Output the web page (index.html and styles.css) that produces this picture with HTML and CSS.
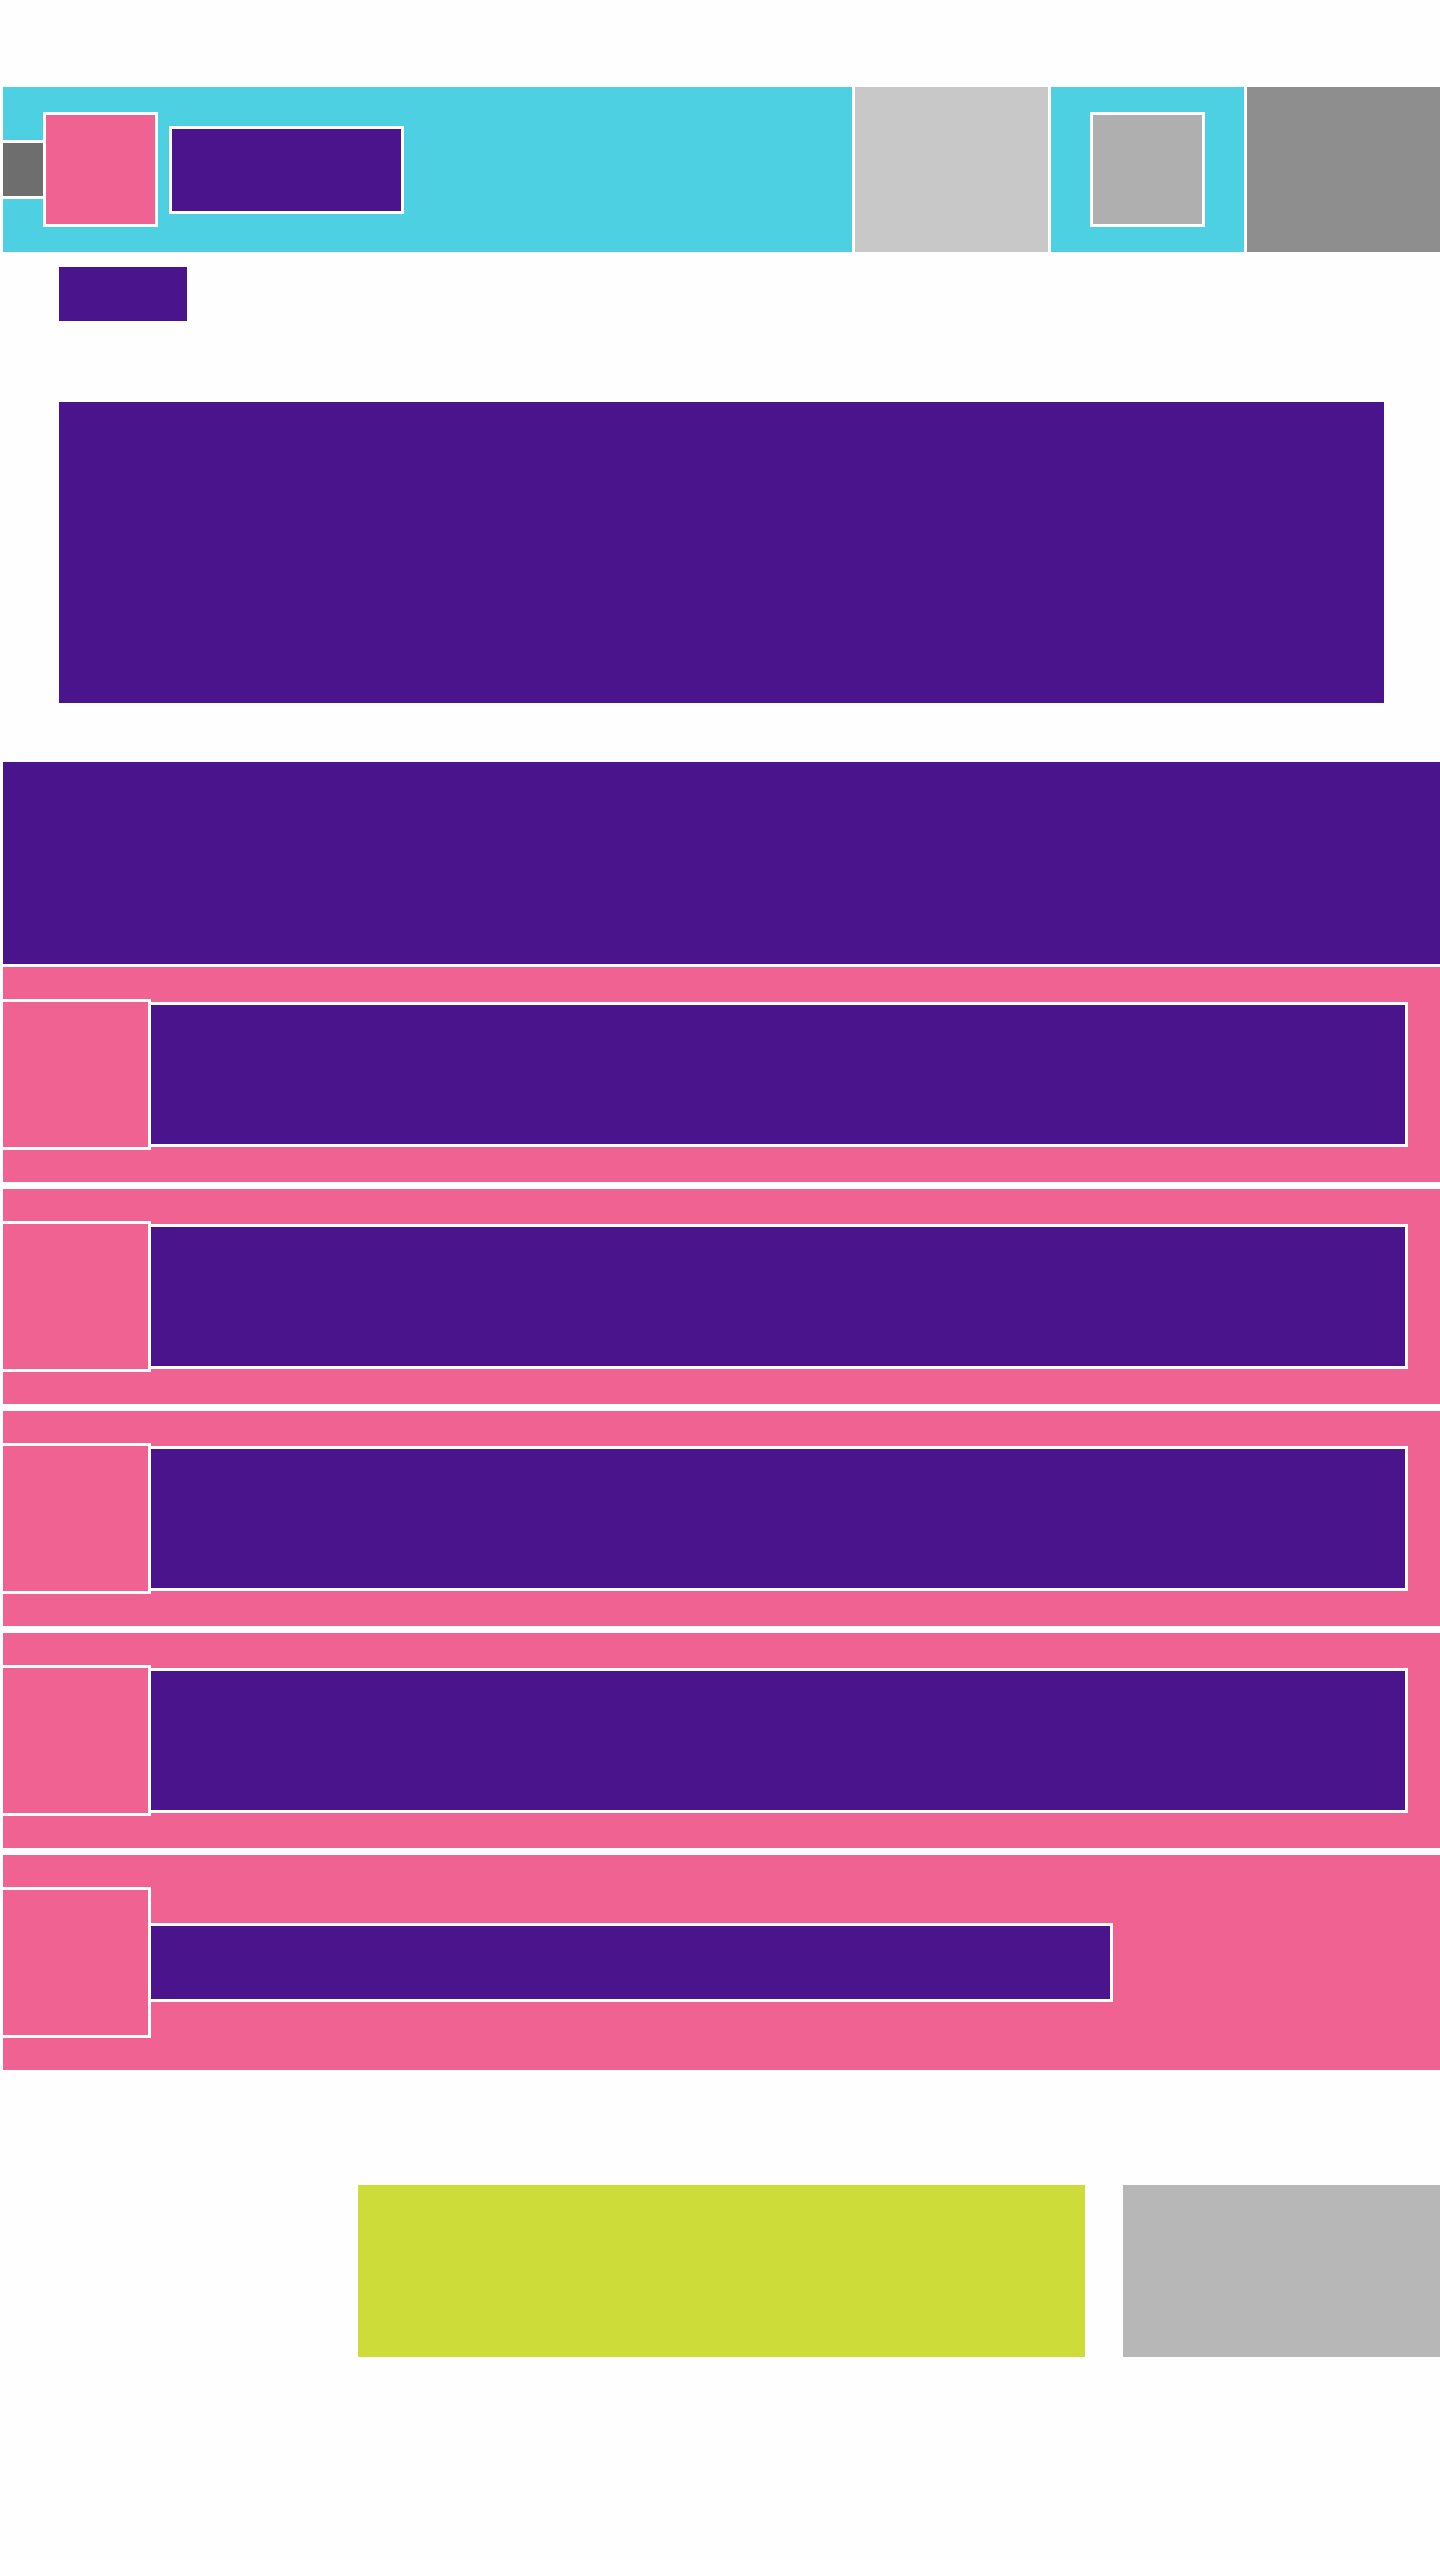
FILE: index.html
```html
<!DOCTYPE html>
<html lang="en">
<head>
  <meta charset="UTF-8" />
  <title>Layout</title>
  <link rel="stylesheet" href="styles.css">
</head>
<body>
  <header class="topbar">
    <div class="brand">
      <button class="menu-btn" aria-label="Menu"></button>
      <div class="logo"></div>
      <div class="site-title"></div>
    </div>
    <div class="nav-item nav-light"></div>
    <div class="nav-item nav-accent">
      <div class="avatar"></div>
    </div>
    <div class="nav-item nav-dark"></div>
  </header>

  <main>
    <div class="tag"></div>
    <section class="hero"></section>

    <section class="banner"></section>

    <ul class="list">
      <li class="list-row">
        <div class="row-icon"></div>
        <div class="row-text"></div>
      </li>
      <li class="list-row">
        <div class="row-icon"></div>
        <div class="row-text"></div>
      </li>
      <li class="list-row">
        <div class="row-icon"></div>
        <div class="row-text"></div>
      </li>
      <li class="list-row">
        <div class="row-icon"></div>
        <div class="row-text"></div>
      </li>
      <li class="list-row">
        <div class="row-icon"></div>
        <div class="row-text row-text-short"></div>
      </li>
    </ul>

    <div class="actions">
      <button class="btn btn-primary"></button>
      <button class="btn btn-secondary"></button>
    </div>
  </main>
</body>
</html>
```

FILE: styles.css
```css
* {
  box-sizing: border-box;
}

body {
  margin: 0;
  background: #fefefe;
  font-family: "Liberation Sans", Arial, sans-serif;
  overflow-x: hidden;
}

/* Top bar */
.topbar {
  display: flex;
  gap: 3px;
  height: 165px;
  margin: 87px 0 0 3px;
}

.brand {
  display: flex;
  align-items: center;
  width: 849px;
  background: #4dd0e1;
}

.menu-btn {
  width: 40px;
  height: 59px;
  padding: 0;
  border: none;
  border-top: 3px solid #fff;
  border-bottom: 3px solid #fff;
  background: #6e6e6e;
}

.logo {
  width: 115px;
  height: 115px;
  background: #f06292;
  border: 3px solid #fff;
}

.site-title {
  width: 235px;
  height: 88px;
  margin-left: 11px;
  background: #4a148c;
  border: 3px solid #fff;
}

.nav-item {
  display: flex;
  align-items: center;
  justify-content: center;
  width: 193px;
}

.nav-light {
  background: #c8c8c8;
}

.nav-accent {
  background: #4dd0e1;
}

.nav-dark {
  background: #8e8e8e;
}

.avatar {
  width: 115px;
  height: 115px;
  background: #afafaf;
  border: 3px solid #fff;
}

/* Content */
.tag {
  width: 128px;
  height: 54px;
  margin: 15px 0 0 59px;
  background: #4a148c;
}

.hero {
  width: 1325px;
  height: 301px;
  margin: 81px 0 0 59px;
  background: #4a148c;
}

.banner {
  height: 202px;
  margin: 59px 0 0 3px;
  background: #4a148c;
}

.list {
  list-style: none;
  margin: 3px 0 0 3px;
  padding: 0;
  display: flex;
  flex-direction: column;
  gap: 7px;
}

.list-row {
  display: flex;
  align-items: center;
  height: 215px;
  background: #f06292;
}

.row-icon {
  flex-shrink: 0;
  width: 151px;
  height: 151px;
  margin-left: -3px;
  background: #f06292;
  border: 3px solid #fff;
}

.row-text {
  width: 1260px;
  height: 145px;
  margin-left: -3px;
  background: #4a148c;
  border: 3px solid #fff;
}

.row-text-short {
  width: 965px;
  height: 79px;
}

/* Bottom actions */
.actions {
  display: flex;
  gap: 38px;
  margin: 115px 0 203px 358px;
}

.btn {
  height: 172px;
  padding: 0;
  border: none;
}

.btn-primary {
  width: 727px;
  background: #cddc39;
}

.btn-secondary {
  width: 317px;
  background: #b7b7b7;
}
```
